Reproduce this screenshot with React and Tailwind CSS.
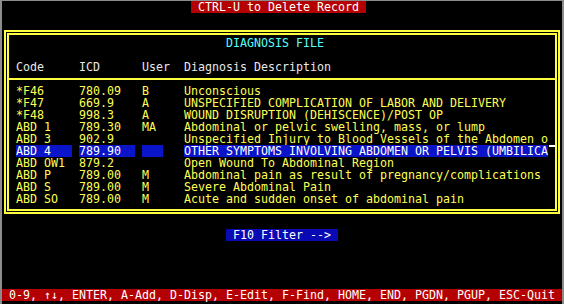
import React from "react";

const rows = [
  { code: "*F46", icd: "780.09", user: "B", desc: "Unconscious" },
  { code: "*F47", icd: "669.9", user: "A", desc: "UNSPECIFIED COMPLICATION OF LABOR AND DELIVERY" },
  { code: "*F48", icd: "998.3", user: "A", desc: "WOUND DISRUPTION (DEHISCENCE)/POST OP" },
  { code: "ABD 1", icd: "789.30", user: "MA", desc: "Abdominal or pelvic swelling, mass, or lump" },
  { code: "ABD 3", icd: "902.9", user: "", desc: "Unspecified Injury to Blood Vessels of the Abdomen o" },
  { code: "ABD 4", icd: "789.90", user: "", desc: "OTHER SYMPTOMS INVOLVING ABDOMEN OR PELVIS (UMBILICA", selected: true },
  { code: "ABD OW1", icd: "879.2", user: "", desc: "Open Wound To Abdominal Region" },
  { code: "ABD P", icd: "789.00", user: "M", desc: "Abdominal pain as result of pregnancy/complications" },
  { code: "ABD S", icd: "789.00", user: "M", desc: "Severe Abdominal Pain" },
  { code: "ABD SO", icd: "789.00", user: "M", desc: "Acute and sudden onset of abdominal pain" },
];

function Row({ code, icd, user, desc, selected, header }) {
  const hl = selected ? "bg-[#0a14c8] text-white" : "";
  return (
    <div className={`h-[12px] flex pl-[7px] ${header ? "text-[#e8e8e8]" : "text-[#ffff55]"}`}>
      <span className={`w-[56px] ${hl}`}>{code}</span>
      <span className="w-[7px]" />
      <span className={`w-[56px] ${hl}`}>{icd}</span>
      <span className="w-[7px]" />
      <span className={`w-[21px] ${hl}`}>{user}</span>
      <span className="w-[21px]" />
      <span className={`w-[364px] ${hl}`}>{desc}</span>
      <span className="w-[7px] h-[12px]">
        {selected && <span className="block h-[2px] w-[6px] bg-white ml-[1px]" />}
      </span>
    </div>
  );
}

export default function App() {
  return (
    <div className="w-[564px] h-[304px] bg-black border-t border-x-2 border-[#8c8c8c] overflow-hidden whitespace-pre font-['DejaVu_Sans_Mono',monospace] text-[11.63px] leading-[12px]">
      <div className="h-[12px] flex pl-[189px]">
        <span className="bg-[#b40000] text-white">{" CTRL-U to Delete Record "}</span>
      </div>
      <div className="h-[12px]" />

      <div className="mt-[5px] mx-[2px] border-[5px] border-double border-[#ffff40] pt-[2px] pb-[4px]">
        <div className="h-[12px] pl-[217px] text-[#55ffff]">DIAGNOSIS FILE</div>
        <div className="h-[12px]" />
        <Row header code="Code" icd="ICD" user="User" desc="Diagnosis Description" />
        <div className="h-[12px] flex items-center">
          <div className="h-[2px] w-full bg-[#ffff40]" />
        </div>
        {rows.map((r) => (
          <Row key={r.code} {...r} />
        ))}
      </div>

      <div className="mt-[3px] h-[12px]" />
      <div className="h-[12px] flex pl-[224px]">
        <span className="bg-[#0a0ab4] text-white">{" F10 Filter --> "}</span>
      </div>
      <div className="h-[48px]" />
      <div className="h-[12px] bg-[#b40000] text-white">
        {" 0-9, ↑↓, ENTER, A-Add, D-Disp, E-Edit, F-Find, HOME, END, PGDN, PGUP, ESC-Quit"}
      </div>
    </div>
  );
}
